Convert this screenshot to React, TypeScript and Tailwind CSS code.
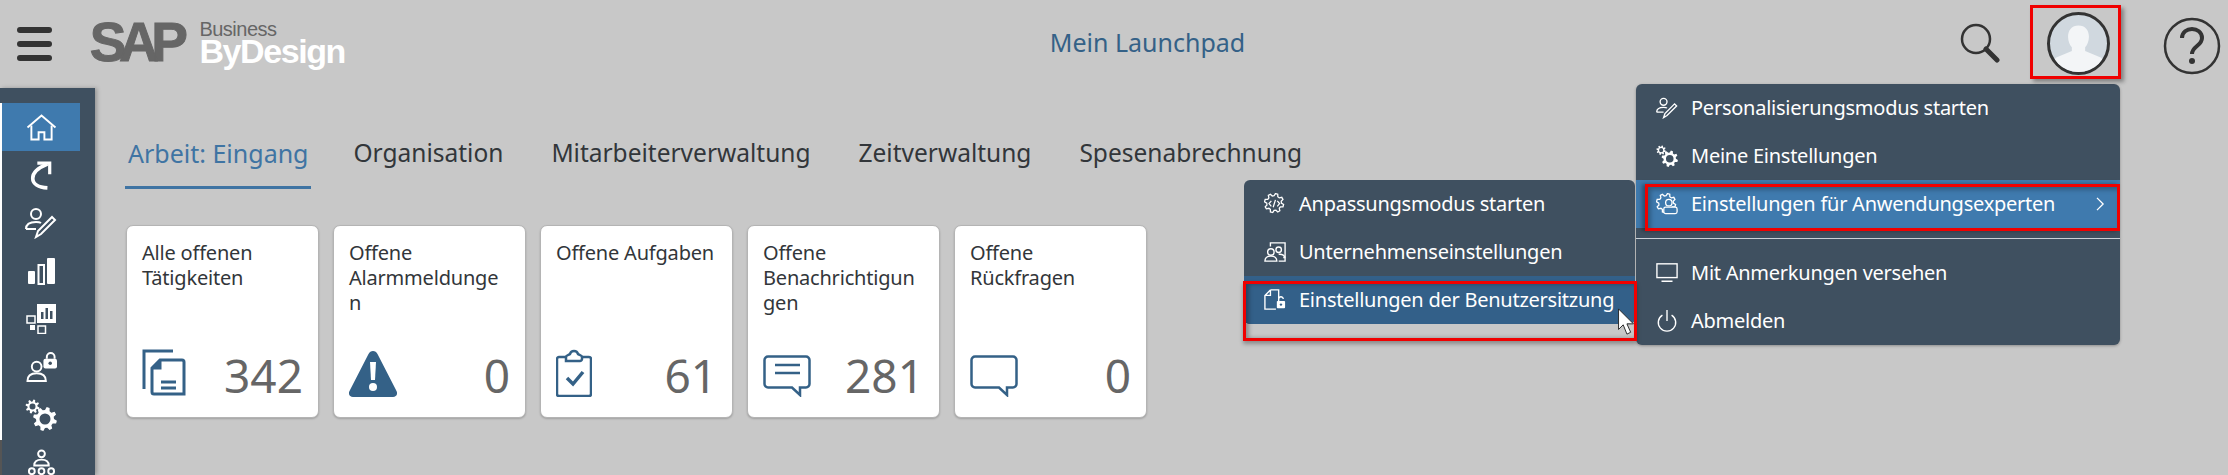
import React from 'react';

// scalloped gear outline, used for every cog in the picture
const gearPath = (cx: number, cy: number, ro: number, ri: number, teeth: number) => {
  const pts: string[] = [];
  const step = (Math.PI * 2) / teeth;
  for (let i = 0; i < teeth; i++) {
    const a = i * step;
    const at = (r: number, t: number) => `${(cx + r * Math.cos(a + t * step)).toFixed(2)} ${(cy + r * Math.sin(a + t * step)).toFixed(2)}`;
    pts.push(`${i === 0 ? 'M' : 'L'}${at(ri, 0)}`, `L${at(ro, 0.18)}`, `L${at(ro, 0.5)}`, `L${at(ri, 0.68)}`);
  }
  return pts.join(' ') + 'Z';
};

const ring = (cx: number, cy: number, r: number) =>
  `M${cx - r} ${cy}a${r} ${r} 0 1 0 ${r * 2} 0a${r} ${r} 0 1 0 ${-r * 2} 0Z`;

function HomeIcon() {
  return (
    <svg viewBox="0 0 32 28" className="w-[31px] h-[27px]" fill="none" stroke="currentColor" strokeWidth="2">
      <path d="M1.500 14 16 1.500 30.500 14" />
      <path d="M5.500 12v14.500h7.500v-7.500h6v7.500h7.500V12" />
    </svg>
  );
}

function ArrowIcon() {
  return (
    <svg viewBox="0 0 24 32" className="w-[22px] h-[31px]" fill="none" stroke="currentColor" strokeWidth="4">
      <path d="M19 29.500C9 29 3 25 3 19 3 14 8 8 19 3.500" />
      <path d="M8 2.500h13.500v12" strokeWidth="3.500" />
    </svg>
  );
}

function UserPenIcon({ className }: { className: string }) {
  return (
    <svg viewBox="0 0 32 32" className={className} fill="none" stroke="currentColor" strokeWidth="2">
      <circle cx="11" cy="7" r="5" />
      <path d="M1 22c0-5 4-7 10-7 2 0 4 .3 5 1M1 22h10" />
      <path d="M11 30l2-6L27 10l3 3-14 14z" />
    </svg>
  );
}

function BarsIcon() {
  return (
    <svg viewBox="0 0 28 28" className="w-[28px] h-[28px]">
      <rect x="1" y="14" width="7" height="13" rx="1" fill="#fff" />
      <rect x="11.500" y="8" width="5.500" height="19" fill="none" stroke="#fff" strokeWidth="2" />
      <rect x="20" y="1" width="8" height="26" rx="1" fill="#fff" />
    </svg>
  );
}

function DashIcon() {
  return (
    <svg viewBox="0 0 30 30" className="w-[30px] h-[30px]">
      <rect x="11" y="0" width="19" height="19" fill="#fff" />
      <rect x="15" y="8" width="2.500" height="7" fill="#3f5060" />
      <rect x="19.500" y="4" width="2.500" height="11" fill="#3f5060" />
      <rect x="24" y="7" width="2.500" height="8" fill="#3f5060" />
      <rect x="1" y="12" width="8" height="7" fill="none" stroke="#fff" strokeWidth="1.500" />
      <rect x="4" y="21" width="5" height="5" fill="#fff" />
      <rect x="12" y="22" width="7.500" height="7.500" fill="none" stroke="#fff" strokeWidth="1.500" />
    </svg>
  );
}

function UserLockIcon() {
  return (
    <svg viewBox="0 0 32 32" className="w-[31px] h-[31px]">
      <g fill="none" stroke="#fff" strokeWidth="2">
        <circle cx="11" cy="15" r="5" />
        <path d="M1.500 30c0-6 4-8 9.500-8s9.500 2 9.500 8z" />
        <path d="M21.500 7V5a4 4 0 0 1 8 0v2" />
      </g>
      <rect x="18" y="7" width="14" height="10" rx="2" fill="#fff" />
      <circle cx="25" cy="11.500" r="1.800" fill="#3f5060" />
    </svg>
  );
}

function GearsIcon({ className }: { className: string }) {
  return (
    <svg viewBox="0 0 32 32" className={className} fill="currentColor" fillRule="evenodd">
      <path d={gearPath(7.500, 7.500, 7, 5, 8) + ring(7.500, 7.500, 3)} />
      <path d={gearPath(20, 20, 12, 9, 8) + ring(20, 20, 5.500)} />
    </svg>
  );
}

function OrgIcon() {
  return (
    <svg viewBox="0 0 30 30" className="w-[29px] h-[29px]" fill="none" stroke="#fff" strokeWidth="2">
      <circle cx="15" cy="5" r="3.500" />
      <path d="M7.500 17c0-4 3-6 7.500-6s7.500 2 7.500 6z" />
      <circle cx="5" cy="23" r="3" />
      <circle cx="15" cy="23" r="3" />
      <circle cx="25" cy="23" r="3" />
      <path d="M0 30c1-2 9-2 10 0M10 30c1-2 9-2 10 0M20 30c1-2 9-2 10 0" />
    </svg>
  );
}

function DocsIcon() {
  return (
    <svg viewBox="0 0 44 48" className="w-[44px] h-[48px] text-[#346187]" fill="none" stroke="currentColor" strokeWidth="3">
      <path d="M31 2H2v38" />
      <path d="M18 11h22a2 2 0 0 1 2 2v32H12a2 2 0 0 1-2-2V19z" />
      <path d="M19 33h15M19 39h15" />
      <path d="M18 11v8h-8" fill="currentColor" />
    </svg>
  );
}

function AlertIcon() {
  return (
    <svg viewBox="0 0 48 46" className="w-[48px] h-[46px]">
      <path d="M24 0c2 0 3.500 1 4.500 3l19 37c1.500 3 0 6-3.500 6H4c-3.500 0-5-3-3.500-6l19-37c1-2 2.500-3 4.500-3z" fill="#346187" />
      <path d="M21 11h6l-1 18h-4z" fill="#fff" />
      <circle cx="24" cy="36" r="4" fill="#fff" />
    </svg>
  );
}

function ClipboardIcon() {
  return (
    <svg viewBox="0 0 36 48" className="w-[36px] h-[48px] text-[#346187]" fill="none" stroke="currentColor" strokeWidth="2.500">
      <path d="M10 8H3a2 2 0 0 0-2 2v35a2 2 0 0 0 2 2h30a2 2 0 0 0 2-2V10a2 2 0 0 0-2-2h-7" />
      <path d="M10 12V8c0-2 3-2 4-3 1-4 7-4 8 0 1 1 4 1 4 3v2c0 1-1 2-2 2z" fill="#fff" />
      <path d="M11 29l6 6 10-12" strokeWidth="3.500" />
    </svg>
  );
}

function ChatIcon({ lines }: { lines?: boolean }) {
  return (
    <svg viewBox="0 0 48 42" className="w-[48px] h-[42px] text-[#346187]" fill="none" stroke="currentColor" strokeWidth="2.500">
      <path d="M5 1.500h38a3.500 3.500 0 0 1 3.500 3.500v24a3.500 3.500 0 0 1-3.500 3.500h-6V40l-8-7.500H5A3.500 3.500 0 0 1 1.500 29V5A3.500 3.500 0 0 1 5 1.500z" />
      {lines && <path d="M12 10h25M12 18h25" />}
    </svg>
  );
}

function ExpertGearIcon({ className, inner }: { className: string; inner: 'code' | 'person' }) {
  return (
    <svg viewBox="0 0 24 24" className={className} fill="none" stroke="currentColor" strokeWidth="1.400">
      <path d={gearPath(11, 11, 10.500, 8, 8)} />
      {inner === 'code' ? (
        <path d="M8 8.500l-2.500 3L8 14.500M14.500 8.500l2.500 3-2.500 3M12.500 7.500l-2.500 8" />
      ) : (
        <>
          <circle cx="14" cy="10.500" r="3.500" fill="#3f7aae" />
          <rect x="8.500" y="15.500" width="14.500" height="7" rx="2" fill="#3f7aae" />
        </>
      )}
    </svg>
  );
}

function CompanyIcon() {
  return (
    <svg viewBox="0 0 24 24" className="w-[22px] h-[22px]" fill="none" stroke="currentColor" strokeWidth="1.500">
      <path d="M7 6V2h16v16h-2" />
      <circle cx="7.500" cy="12" r="3.500" />
      <path d="M1 22c0-4 3-5.500 6.500-5.500S14 18 14 22z" />
      <circle cx="16" cy="9.500" r="3" />
      <path d="M16 22h7v-3c0-3-3-5-7-4.500" />
    </svg>
  );
}

function SessionIcon() {
  return (
    <svg viewBox="0 0 24 24" className="w-[22px] h-[22px]">
      <path d="M7 1h9v9M7 1L1 7v15h12M7 1v6H1" fill="none" stroke="currentColor" strokeWidth="1.500" />
      <rect x="14" y="13" width="9" height="8" rx="1" fill="#fff" />
      <path d="M16 13v-2a2.500 2.500 0 0 1 5 0" fill="none" stroke="#fff" strokeWidth="1.500" />
      <circle cx="18.500" cy="17" r="1.300" fill="#336089" />
    </svg>
  );
}

function ScreenIcon() {
  return (
    <svg viewBox="0 0 24 24" className="w-[22px] h-[22px]" fill="none" stroke="currentColor" strokeWidth="1.500">
      <rect x="1" y="2" width="22" height="15" />
      <path d="M6 21h12" />
    </svg>
  );
}

function PowerIcon() {
  return (
    <svg viewBox="0 0 24 24" className="w-[22px] h-[22px]" fill="none" stroke="currentColor" strokeWidth="1.500">
      <path d="M7 5.500a9.500 9.500 0 1 0 10 0M12 0v12" />
    </svg>
  );
}

const sideItems = [
  <HomeIcon />,
  <ArrowIcon />,
  <UserPenIcon className="w-[32px] h-[32px]" />,
  <BarsIcon />,
  <DashIcon />,
  <UserLockIcon />,
  <GearsIcon className="w-[32px] h-[32px]" />,
  <OrgIcon />,
];

const tabs = ['Arbeit: Eingang', 'Organisation', 'Mitarbeiterverwaltung', 'Zeitverwaltung', 'Spesenabrechnung'];

const cards = [
  { title: 'Alle offenen Tätigkeiten', value: '342', icon: <DocsIcon /> },
  { title: 'Offene Alarmmeldungen', value: '0', icon: <AlertIcon /> },
  { title: 'Offene Aufgaben', value: '61', icon: <ClipboardIcon /> },
  { title: 'Offene Benachrichtigungen', value: '281', icon: <ChatIcon lines /> },
  { title: 'Offene Rückfragen', value: '0', icon: <ChatIcon /> },
];

function MenuRow({ icon, label, bg, chevron }: { icon: React.ReactNode; label: string; bg?: string; chevron?: boolean }) {
  return (
    <div className={`h-12 flex items-center pl-5 gap-[13px] text-[20px] tracking-[-0.25px] text-white ${bg ?? ''}`}>
      <span className="w-[22px] flex justify-center shrink-0">{icon}</span>
      <span className="flex-1 whitespace-nowrap">{label}</span>
      {chevron && (
        <svg viewBox="0 0 10 16" className="w-[9px] h-[14px] mr-[15px]" fill="none" stroke="currentColor" strokeWidth="1.500">
          <path d="M1 1l7 7-7 7" />
        </svg>
      )}
    </div>
  );
}

export default function App() {
  return (
    <div className="relative w-[2228px] h-[475px] overflow-hidden bg-[#c8c8c8] font-['Noto_Sans',sans-serif]">
      {/* top bar */}
      <header className="flex items-center h-[88px]">
        <div className="w-[345px] flex items-center shrink-0">
          <div className="ml-[17px] w-[45px] flex flex-col gap-2">
            <div className="h-[6px] rounded-full bg-[#333]" />
            <div className="h-[6px] rounded-full bg-[#333]" />
            <div className="h-[6px] rounded-full bg-[#333]" />
          </div>
          <div className="ml-[38px] flex items-center font-['Liberation_Sans',sans-serif]">
            <span className="text-[55px] leading-none font-bold tracking-[-7.5px] text-[#666] [-webkit-text-stroke:1px_#666] -mt-[3px]">SAP</span>
            <div className="ml-[19px] flex flex-col">
              <span className="text-[20px] leading-[14px] tracking-[-0.5px] text-[#666]">Business</span>
              <span className="text-[34px] leading-[31px] tracking-[-1.4px] font-bold text-white">ByDesign</span>
            </div>
          </div>
        </div>
        <div className="flex-1 text-center text-[25px] text-[#346187] -mt-[3px]">Mein Launchpad</div>
        <div className="w-[278px] shrink-0 flex items-center">
          <svg viewBox="0 0 40 40" className="ml-[10px] w-[40px] h-[40px] -mt-[3px]" fill="none" stroke="#333">
            <circle cx="16" cy="16" r="14" strokeWidth="2.500" />
            <path d="M26 26l11 11" strokeWidth="5" strokeLinecap="round" />
          </svg>
          <div className="ml-[47px] w-[63px] h-[63px] -mt-[2px] rounded-full border-[3px] border-[#333] bg-[#d0d8df] overflow-hidden">
            <svg viewBox="0 0 60 60" className="w-full h-full" fill="#f3f5f7">
              <path d="M30 11c7 0 11 5 11 12 0 5-2 9-4 11v4l17 7c3 5 4 10 4 15H2c0-5 1-10 4-15l17-7v-4c-2-2-4-6-4-11 0-7 4-12 11-12z" />
            </svg>
          </div>
          <svg viewBox="0 0 58 58" className="ml-[53px] w-[58px] h-[58px] mt-[4px]" fill="none" stroke="#333" strokeWidth="2.500">
            <circle cx="29" cy="29" r="27" />
            <path d="M19 21c0-6 5-9 10-9s10 3 10 9c0 8-10 8-10 16" strokeWidth="4" />
            <circle cx="29" cy="44" r="3" fill="#333" stroke="none" />
          </svg>
        </div>
      </header>

      <div className="flex h-[387px]">
        {/* left nav */}
        <nav className="w-[95px] shrink-0 bg-[#3f5060] pt-[15px] pl-[2px] shadow-[2px_0_4px_rgba(0,0,0,0.25)] text-white">
          {sideItems.map((icon, i) => (
            <div key={i} className={`w-[78px] h-[48px] flex items-center justify-center ${i === 0 ? 'bg-[#3f7aae]' : ''}`}>
              {icon}
            </div>
          ))}
        </nav>

        <main className="pl-[30px] pt-[46px]">
          <div className="flex gap-[48px] text-[24.5px] leading-[38px] text-[#32363a]">
            {tabs.map((t, i) => (
              <div
                key={t}
                className={i === 0 ? 'text-[25px] text-[#3f74a3] border-b-[3px] border-[#3f74a3] px-[3px] pb-[14px] -mr-[6px] whitespace-nowrap' : 'whitespace-nowrap'}
              >
                {t}
              </div>
            ))}
          </div>
          <div className="flex gap-[14px] mt-[36px] ml-[1px]">
            {cards.map((c) => (
              <div
                key={c.title}
                className="w-[193px] h-[193px] rounded-[7px] bg-white border border-[#b4b4b4] shadow-[0_1px_2px_rgba(0,0,0,0.2)] pl-[15px] pr-[15px] pt-[14px] pb-[20px] flex flex-col justify-between"
              >
                <div className="text-[20px] leading-[25px] tracking-[-0.2px] text-[#32363a] pr-[1px] wrap-anywhere">{c.title}</div>
                <div className="flex items-end justify-between">
                  {c.icon}
                  <span className="text-[46px] leading-[44px] text-[#666]">{c.value}</span>
                </div>
              </div>
            ))}
          </div>
        </main>
      </div>

      {/* edge of the window behind the nav */}
      <div className="absolute left-0 top-[103px] w-[2px] h-[337px] bg-white" />
      <div className="absolute left-0 top-[440px] w-[2px] h-[35px] bg-[#555]" />

      {/* user menu */}
      <div className="absolute left-[1636px] top-[84px] w-[484px] rounded-md bg-[#3f5060] overflow-hidden shadow-[0_1px_3px_rgba(0,0,0,0.3)]">
        <MenuRow icon={<UserPenIcon className="w-[22px] h-[22px]" />} label="Personalisierungsmodus starten" />
        <MenuRow icon={<GearsIcon className="w-[22px] h-[22px]" />} label="Meine Einstellungen" />
        <MenuRow icon={<ExpertGearIcon className="w-[22px] h-[22px]" inner="person" />} label="Einstellungen für Anwendungsexperten" bg="bg-[#3f7aae]" chevron />
        <div className="mt-[10px] h-px bg-[#c8d0d8]" />
        <div className="mt-[10px]" />
        <MenuRow icon={<ScreenIcon />} label="Mit Anmerkungen versehen" />
        <MenuRow icon={<PowerIcon />} label="Abmelden" />
      </div>

      {/* submenu */}
      <div className="absolute left-[1244px] top-[180px] w-[391px] rounded-md bg-[#3f5060] overflow-hidden">
        <MenuRow icon={<ExpertGearIcon className="w-[22px] h-[22px]" inner="code" />} label="Anpassungsmodus starten" />
        <MenuRow icon={<CompanyIcon />} label="Unternehmenseinstellungen" />
        <MenuRow icon={<SessionIcon />} label="Einstellungen der Benutzersitzung" bg="bg-[#336089]" />
      </div>

      {/* red callouts */}
      <div className="absolute left-[2030px] top-[5px] w-[91px] h-[74px] border-[3px] border-[#f00000] shadow-[3px_3px_4px_rgba(0,0,0,0.35)]" />
      <div className="absolute left-[1645px] top-[184px] w-[475px] h-[47px] border-[3px] border-[#f00000] shadow-[-3px_0_4px_rgba(0,0,0,0.35),inset_3px_3px_4px_rgba(0,0,0,0.25)]" />
      <div className="absolute left-[1243px] top-[281px] w-[394px] h-[60px] border-[3px] border-[#f00000] shadow-[inset_3px_0_4px_rgba(0,0,0,0.3),0_3px_4px_rgba(0,0,0,0.3)]" />

      {/* mouse pointer */}
      <svg viewBox="0 0 18 30" className="absolute left-[1617px] top-[308px] w-[18px] h-[28px]">
        <path d="M1 1v22l5-5 4 10 4-2-4-9h7z" fill="#fff" stroke="#222" strokeWidth="1" />
      </svg>
    </div>
  );
}
